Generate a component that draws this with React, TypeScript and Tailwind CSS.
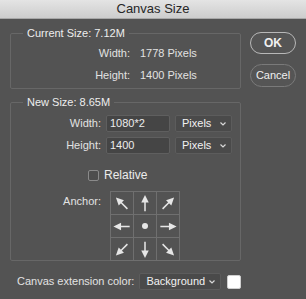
import type { ReactNode } from "react";

const font = "font-['Liberation_Sans','Helvetica',sans-serif]";

const fieldCls =
  "h-[17px] rounded-[2px] border border-[#5f5f5f] bg-[#454545] px-[3px] text-[11px] leading-[15px] text-[#ececec] outline-none";

function Arrow({ angle }: { angle: number }) {
  return (
    <svg width="23" height="23" viewBox="0 0 23 23">
      <g transform={`rotate(${angle} 11.5 11.5)`}>
        <line x1="11.5" y1="19.5" x2="11.5" y2="9" stroke="#e6e6e6" strokeWidth="1.6" />
        <polygon points="11.5,2.5 7.6,10.5 15.4,10.5" fill="#e6e6e6" />
      </g>
    </svg>
  );
}

function Chevron() {
  return (
    <svg width="8" height="6" viewBox="0 0 8 6" className="ml-auto">
      <path d="M1.5 1.5 L4 4 L6.5 1.5" fill="none" stroke="#d8d8d8" strokeWidth="1.2" />
    </svg>
  );
}

function SelectBox({ label, width }: { label: string; width: string }) {
  return (
    <div
      className={`flex h-[17px] items-center rounded-[2px] border border-[#5c5c5c] bg-[#4a4a4a] pl-[6px] pr-[4px] text-[11px] text-[#f2f2f2] ${width}`}
    >
      <span>{label}</span>
      <Chevron />
    </div>
  );
}

function Group({ title, children, className }: { title: string; children: ReactNode; className?: string }) {
  return (
    <fieldset className={`rounded-[2px] border border-[#676767] px-0 ${className ?? ""}`}>
      <legend className="ml-[12px] px-[4px] text-[11px] leading-[12px] text-[#eeeeee]">{title}</legend>
      {children}
    </fieldset>
  );
}

const anchors: Array<number | null> = [-45, 0, 45, -90, null, 90, -135, 180, 135];

export default function App() {
  return (
    <div className={`h-[299px] w-[306px] overflow-hidden bg-[#535353] ${font}`}>
      {/* Title bar */}
      <div className="flex h-[19px] items-center justify-center border-b border-[#a8a8a8] bg-gradient-to-b from-[#e4e4e4] to-[#cdcdcd] text-[13px] text-[#262626]">
        Canvas Size
      </div>

      <div className="flex px-[10px] pt-[8px]">
        <div className="w-[231px]">
          <Group title="Current Size: 7.12M" className="h-[62px]">
            <div className="grid grid-cols-[119px_1fr] gap-x-[10px] pt-[3px] text-[11px] text-[#e2e2e2]">
              <span className="h-[22px] text-right leading-[22px]">Width:</span>
              <span className="h-[22px] leading-[22px]">1778 Pixels</span>
              <span className="h-[22px] text-right leading-[22px]">Height:</span>
              <span className="h-[22px] leading-[22px]">1400 Pixels</span>
            </div>
          </Group>

          <Group title="New Size: 8.65M" className="mt-[7px] h-[165px]">
            <div className="flex flex-col pt-[7px] text-[11px] text-[#e2e2e2]">
              <div className="flex items-center">
                <span className="w-[90px] text-right">Width:</span>
                <div className={`${fieldCls} ml-[5px] w-[64px] border-[#3c7cd6]`}>1080*2</div>
                <div className="ml-[5px]">
                  <SelectBox label="Pixels" width="w-[57px]" />
                </div>
              </div>
              <div className="mt-[5px] flex items-center">
                <span className="w-[90px] text-right">Height:</span>
                <div className={`${fieldCls} ml-[5px] w-[64px]`}>1400</div>
                <div className="ml-[5px]">
                  <SelectBox label="Pixels" width="w-[57px]" />
                </div>
              </div>
              <div className="mt-[12px] flex items-center pl-[77px]">
                <span className="h-[11px] w-[11px] rounded-[2px] border border-[#8a8a8a] bg-[#4d4d4d]" />
                <span className="ml-[5px] text-[12px] text-[#ececec]">Relative</span>
              </div>
              <div className="mt-[7px] flex items-start">
                <span className="mt-[2px] w-[90px] text-right">Anchor:</span>
                <div className="ml-[9px] grid grid-cols-[repeat(3,23px)] border-l border-t border-[#6f6f6f]">
                  {anchors.map((a, i) => (
                    <div
                      key={i}
                      className="flex h-[23px] w-[23px] items-center justify-center border-b border-r border-[#6f6f6f]"
                    >
                      {a === null ? (
                        <span className="h-[6px] w-[6px] rounded-full bg-[#e6e6e6]" />
                      ) : (
                        <Arrow angle={a} />
                      )}
                    </div>
                  ))}
                </div>
              </div>
            </div>
          </Group>
        </div>

        {/* Buttons */}
        <div className="ml-[9px] flex flex-col pt-[5px]">
          <button
            type="button"
            className="h-[22px] w-[46px] rounded-full border border-[#b8b8b8] bg-[#555555] text-[12px] font-bold text-[#f0f0f0]"
          >
            OK
          </button>
          <button
            type="button"
            className="mt-[10px] h-[23px] w-[46px] rounded-full border border-[#7a7a7a] bg-[#555555] text-[11px] text-[#f0f0f0]"
          >
            Cancel
          </button>
        </div>
      </div>

      {/* Extension color */}
      <div className="mt-[12px] flex items-center pl-[17px] text-[11px] text-[#e2e2e2]">
        <span>Canvas extension color:</span>
        <div className="ml-[5px]">
          <SelectBox label="Background" width="w-[82px]" />
        </div>
        <span className="ml-[6px] h-[14px] w-[14px] rounded-[2px] border border-[#cfcfcf] bg-white" />
      </div>
    </div>
  );
}
